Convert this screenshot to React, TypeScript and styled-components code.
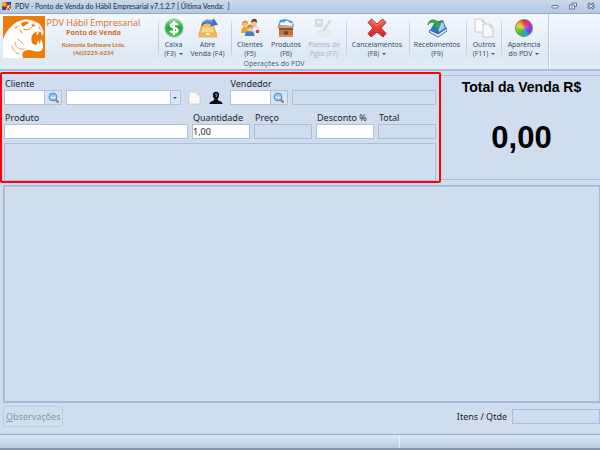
import React from "react";
import styled, { createGlobalStyle, css } from "styled-components";

const ui = `"Noto Sans", "Open Sans", sans-serif`;
const ribbonFont = `"Open Sans", "Noto Sans", sans-serif`;
const titleFont = `Lato, "Open Sans", sans-serif`;

const GlobalStyle = createGlobalStyle`
  *, *::before, *::after { box-sizing: border-box; }
  html, body { margin: 0; height: 100%; }
  body { background: #cfddee; font-family: ${ui}; font-size: 9px; color: #1c1f26; }
  button, input, select, output { font: inherit; color: inherit; margin: 0; }
`;

const Window = styled.div`
  display: flex;
  flex-direction: column;
  min-height: 100vh;
  overflow: hidden;
`;

const TitleBar = styled.header`
  display: flex;
  align-items: center;
  height: 14px;
  padding: 0 5px 2px 2px;
  background: linear-gradient(#c9d9ec, #b3c9e4);
  border-bottom: 1px solid #93abc9;
`;

const Title = styled.h1`
  flex: 1;
  margin: 0 0 0 3px;
  font: 500 7px/12px ${titleFont};
  color: #22344f;
  white-space: pre;
`;

const WindowButtons = styled.div`
  display: flex;
  gap: 10px;
`;

const WindowButton = styled.button`
  display: flex;
  padding: 0;
  border: 0;
  background: none;
`;

const Ribbon = styled.nav`
  display: flex;
  height: 57px;
  background: linear-gradient(#f4f8fd, #e6eef8 50%, #dde8f4 75%, #e4edf7);
  border-bottom: 2px solid #a9bdd8;
`;

const RibbonPage = styled.div`
  display: flex;
  flex-direction: column;
  border-right: 1px solid #bccce0;
  box-shadow: 1px 0 #f4f8fc;
`;

const RibbonRow = styled.div`
  display: flex;
  height: 45px;
`;

const Caption = styled.div`
  text-align: center;
  font: 7px/9px ${ribbonFont};
  color: #3f5878;
`;

const Brand = styled.div`
  display: flex;
  width: 158px;
  padding: 2px 0 0 3px;
`;

const BrandText = styled.div`
  flex: 1;
  padding-right: 16px;
  text-align: center;
  color: #d0701a;
  white-space: nowrap;
`;

const BrandName = styled.div`
  font: 500 9px/13px ${ribbonFont};
`;

const BrandProduct = styled.div`
  font: 700 7px/8px ${ribbonFont};
`;

const BrandContact = styled.div`
  margin-top: 4px;
  font: 700 6px/8px ${titleFont};
`;

const Group = styled.div<{ $width: number }>`
  display: flex;
  width: ${(p) => p.$width}px;
  border-left: 1px solid;
  border-image: linear-gradient(transparent 10%, #bfcfe2 30%, #bfcfe2 75%, transparent) 1;
`;

const Tool = styled.button<{ $width: number }>`
  display: flex;
  flex-direction: column;
  align-items: center;
  width: ${(p) => p.$width}px;
  padding: 4px 0 0;
  border: 0;
  background: none;
  font: 500 7px/9px ${ribbonFont};
  color: #2c4666;
  white-space: nowrap;
  svg { flex: none; }
  &:disabled { color: #a3b1c2; }
`;

const ToolLabel = styled.span`
  margin-top: 2px;
`;

const Caret = styled.span`
  display: inline-block;
  margin: 0 0 1px 3px;
  border: 2px solid transparent;
  border-top-color: #35506f;
  border-bottom: 0;
`;

const Top = styled.div`
  display: grid;
  grid-template-columns: minmax(0, 441fr) minmax(0, 159fr);
  margin-top: 1px;
`;

const SaleForm = styled.form`
  display: flex;
  flex-direction: column;
  padding: 4px 3px 0 2px;
  border: 2px solid #fb0007;
  border-radius: 2px;
`;

const FormRow = styled.div`
  display: flex;
  align-items: flex-end;
`;

const ProductRow = styled.div`
  display: grid;
  grid-template-columns: 184fr 58fr 58fr 58fr 58fr;
  gap: 4px;
  margin: 7px 0 4px;
`;

const Field = styled.div<{ $gap?: number }>`
  display: flex;
  flex-direction: column;
  min-width: 0;
  margin-left: ${(p) => p.$gap ?? 0}px;
`;

const GrowingField = styled(Field)`
  flex: 145 1 0;
`;

const Label = styled.label`
  padding-left: 1px;
  line-height: 12px;
  white-space: nowrap;
`;

const ReadOnlyLook = css`
  background: transparent;
  border-color: #aabfdb;
`;

const Input = styled.input<{ $width?: number }>`
  width: ${(p) => (p.$width ? `${p.$width}px` : "100%")};
  min-width: 0;
  height: 15px;
  padding: 0;
  border: 1px solid #aec2dc;
  border-radius: 0;
  background: #fff;
  outline: 0;
  &:read-only { ${ReadOnlyLook} }
`;

const Lookup = styled.div`
  display: flex;
`;

const LookupButton = styled.button`
  display: flex;
  align-items: center;
  justify-content: center;
  width: 17px;
  height: 15px;
  padding: 0;
  border: 1px solid #aec2dc;
  border-left: 0;
  background: #d6e3f2;
`;

const Combo = styled.div`
  display: grid;
  flex: 115 1 0;
  margin-left: 4px;
  > * { grid-area: 1 / 1; }
`;

const Select = styled.select`
  appearance: none;
  width: 100%;
  height: 15px;
  padding: 0 12px 0 2px;
  border: 1px solid #aec2dc;
  border-radius: 0;
  background: #fff;
`;

const ComboArrow = styled.span`
  display: flex;
  align-items: center;
  justify-content: center;
  justify-self: end;
  width: 11px;
  border: 1px solid #aec2dc;
  background: #d9e5f3;
  pointer-events: none;
  ${Caret} { margin: 0; }
`;

const IconButton = styled.button`
  display: flex;
  align-items: center;
  justify-content: center;
  width: 14px;
  height: 15px;
  margin-left: 7px;
  padding: 0;
  border: 0;
  background: none;
`;

const Description = styled.output`
  display: block;
  height: 38px;
  border: 1px solid #aabfdb;
`;

const TotalPanel = styled.section`
  margin: 3px 0;
  padding: 2px 0 0 2px;
  border: solid #aabfdb;
  border-width: 1px 0;
  text-align: center;
  font-family: "Liberation Sans", Arial, sans-serif;
  font-weight: 700;
  color: #000;
  white-space: nowrap;
`;

const TotalTitle = styled.h2`
  margin: 0;
  font-size: 14px;
  line-height: 18px;
`;

const TotalValue = styled.output`
  display: block;
  margin-top: 24px;
  font-size: 31px;
  line-height: 36px;
`;

const Items = styled.main`
  flex: 1;
  margin: 2px 0 0 3px;
  border: 2px solid #a6bbd8;
  border-right-width: 1px;
  box-shadow: inset 1px 1px #dde8f4;
`;

const Footer = styled.footer`
  display: flex;
  align-items: center;
  height: 32px;
  padding: 0 0 4px 3px;
  border-bottom: 1px solid #93abcb;
`;

const NotesButton = styled.button`
  height: 21px;
  padding: 0 2px;
  border: 1px solid #bccde0;
  border-radius: 2px;
  background: #d0dfee;
  &:disabled { color: #8496ab; }
`;

const Count = styled.div`
  display: flex;
  align-items: center;
  gap: 5px;
  margin-left: auto;
`;

const StatusBar = styled.div`
  display: flex;
  height: 15px;
  border-bottom: 2px solid #8797ab;
  background: linear-gradient(#dde8f4, #bccde1);
`;

const StatusPane = styled.div`
  flex: 2;
  border-right: 1px solid #e6eef7;
  & + & { flex: 1; border-right: 0; }
`;

const AppIcon = () => (
  <svg width="10" height="10" viewBox="0 0 10 10" aria-hidden="true">
    <rect x="0" y="1" width="9" height="8" fill="#c8381e" />
    <path d="M0 1h3l2 3-2 2-3-1z" fill="#f3a61e" />
    <path d="M5 1l4 0v4l-2-1z" fill="#2c4c8e" />
    <path d="M1 9V5l3 2 1 2z" fill="#28458a" />
    <path d="M5 5l4 4M8 4L4 9" stroke="#fff" strokeWidth="1" />
    <path d="M5 2l1 2 3 1-2 1" fill="#f6c74a" />
  </svg>
);

const JaguarLogo = () => (
  <svg width="42" height="42" viewBox="0 0 42 42" aria-hidden="true">
    <rect width="42" height="42" fill="#f07c08" />
    <path
      fill="#fff"
      d="M0 42V23C2 18 5 13 9 10C11 7 15 5 20 4C24 3 29 4 33 6C36 7 38 9 39 12C41 15 41 18 39 20L38 16C35 15 32 15 30 18C28 20 28 24 29 27C31 29 34 30 37 27L38 23C40 27 41 31 39 34C36 37 31 35 27 34C21 34 18 36 20 42Z"
    />
    <path d="M33 15L34 20L36 16ZM33 31L35 24L37 29Z" fill="#fff" />
    <path d="M18 8C20 5 24 5 26 7C24 8 22 9 20 11ZM28 8L33 9L30 11Z" fill="#f07c08" />
    <path
      d="M21 13C25 15 27 13 29 11M12 12L15 10M17 14L19 17M36 11L37 13"
      fill="none"
      stroke="#f07c08"
      strokeLinecap="round"
    />
    <path d="M12 26C12 31 16 34 21 33M9 30C10 35 13 37 16 38M15 23L20 28" fill="none" stroke="#f4a050" strokeLinecap="round" />
  </svg>
);

const CashIcon = () => (
  <svg width="20" height="20" viewBox="0 0 20 20" aria-hidden="true">
    <defs>
      <linearGradient id="cash" x2="0" y2="1">
        <stop stopColor="#8fe096" />
        <stop offset=".5" stopColor="#25a73e" />
        <stop offset="1" stopColor="#55cf67" />
      </linearGradient>
    </defs>
    <circle cx="10" cy="10" r="9.2" fill="url(#cash)" stroke="#9ccfa8" />
    <path d="M13.6 6.900C12.600 5.300 6.900 4.800 6.900 7.500C6.900 10.500 13.500 9 13.500 12.300C13.500 15.200 7.400 14.800 6.300 12.900M10 3V17" fill="none" stroke="#fff" strokeWidth="2.200" />
  </svg>
);

const OpenSaleIcon = () => (
  <svg width="20" height="20" viewBox="0 0 20 20" aria-hidden="true">
    <path d="M3 9L6 5H12L16 9L18.500 16V19H1V16Z" fill="#f5bf5a" stroke="#dc9f3c" strokeWidth=".7" />
    <path d="M5 9.500h9l1.500 4.500H3.500z" fill="#fbd98a" />
    <path d="M1 16h17.500" stroke="#e0a23c" strokeWidth=".8" />
    <path d="M8 15h4v2H8z" fill="#fff0c4" />
    <path d="M3.500 8C4 3 9 .500 14 3L15.500 .8L19.500 6.500L12.500 8L13.500 5.800C9 4 6 5 3.500 8Z" fill="#3f73cf" stroke="#2b59a8" strokeWidth=".6" />
    <path d="M6 4.500c2-2 5-2 8-.200" stroke="#8db5ee" fill="none" />
  </svg>
);

const CustomersIcon = () => (
  <svg width="20" height="20" viewBox="0 0 20 20" aria-hidden="true">
    <path d="M1 15c0-5 2-6 4-6s4 2 4 6z" fill="#e2a62c" />
    <circle cx="5" cy="6" r="3" fill="#f3c193" />
    <path d="M2 8c-1-7 7-7 6-2C6 5 4 4 3 6z" fill="#d9982a" />
    <path d="M11 14c0-5 2-6 4-6s4 2 4 6z" fill="#e9eef7" stroke="#8ba3c9" strokeWidth=".6" />
    <circle cx="14" cy="5" r="3" fill="#f3c193" />
    <path d="M11 5c0-6 7-5 6 0-1-2-4-2-6 0z" fill="#7b3a18" />
    <path d="M5 18c0-4 2-5 4.500-5s5 1 5 5z" fill="#3e7cd0" />
    <circle cx="10" cy="10.500" r="3" fill="#f7c79c" />
    <path d="M7 11c-1-6 7-6 6 0-1-2-4-2-6 0z" fill="#d98a24" />
    <path d="M16 12h3v3h-3z" fill="#d23e35" />
  </svg>
);

const ProductsIcon = () => (
  <svg width="20" height="20" viewBox="0 0 20 20" aria-hidden="true">
    <path d="M4 2l5-1 7 2 2 5H2z" fill="#4f9fe0" />
    <path d="M4 7c0-3 2-4 4-2 1-3 5-3 5 0 3-1 4 1 3 3z" fill="#f4faff" />
    <path d="M1 8h17l-1.500 3h-14z" fill="#d99b62" />
    <path d="M3 10h14v9H3z" fill="#b97742" />
    <path d="M3 10h14v2H3z" fill="#8f5529" />
    <circle cx="10" cy="15" r="2" fill="#76411d" />
    <path d="M3 18h14" stroke="#e2b07c" />
  </svg>
);

const PlansIcon = () => (
  <svg width="20" height="20" viewBox="0 0 20 20" aria-hidden="true">
    <rect x="1" y="1" width="8" height="8" rx="1" fill="#d2dae3" />
    <path d="M3 3h4v2H3z" fill="#eff3f7" />
    <path d="M4 14l7-3 7 3-8 5z" fill="#e9edf2" stroke="#d0d8e1" strokeWidth=".7" />
    <path d="M17 3l-6 9-2 2 .500-3 6-9z" fill="#cbd4de" />
  </svg>
);

const CancelIcon = () => (
  <svg width="20" height="20" viewBox="0 0 20 20" aria-hidden="true">
    <defs>
      <linearGradient id="cancel" x2="0" y2="1">
        <stop stopColor="#f0675a" />
        <stop offset="1" stopColor="#d81f20" />
      </linearGradient>
    </defs>
    <path d="M4.500 1L10 6L15.500 1L19 4.500L14 10L19 15.500L16 19L10 14L4 19L1 15.500L6 10L1 4.500Z" fill="url(#cancel)" stroke="#b21f20" strokeLinejoin="round" strokeWidth=".9" />
    <path d="M4.500 2.500L10 7.500L15.500 2.500" fill="none" stroke="#f9a79d" strokeWidth=".7" />
  </svg>
);

const ReceiptsIcon = () => (
  <svg width="20" height="20" viewBox="0 0 20 20" aria-hidden="true">
    <path d="M8 4l8-2 4 10-9 6-9-4z" fill="#2f6fca" />
    <path d="M3 12l8 4 9-6v3l-9 6-9-5z" fill="#e6eef8" stroke="#1e4fa0" strokeWidth=".8" />
    <path d="M10 6l6-2 2 6-6 4z" fill="#a8cdf3" />
    <path d="M1 7C1 1 9 0 11 5L14 4L11.500 11L6 8L8.500 6.500C7 3.500 3 3.500 1 7Z" fill="#35ad3e" stroke="#1f8530" strokeWidth=".6" />
  </svg>
);

const OthersIcon = () => (
  <svg width="20" height="20" viewBox="0 0 20 20" aria-hidden="true">
    <path d="M1 1h7l3 3v10H1z" fill="#fbfbfb" stroke="#bdbdbd" strokeWidth=".7" />
    <path d="M8 1v3h3" fill="#ddd" stroke="#bdbdbd" strokeWidth=".6" />
    <path d="M9 6h7l3 3v10H9z" fill="#f7f7f7" stroke="#b2b2b2" strokeWidth=".7" />
    <path d="M16 6v3h3" fill="#ddd" stroke="#b2b2b2" strokeWidth=".6" />
  </svg>
);

const ColorWheel = styled.span`
  width: 18px;
  height: 18px;
  margin: 1px;
  border: 1px solid #777f8c;
  border-radius: 50%;
  background:
    radial-gradient(circle at 50% 45%, rgba(255, 255, 255, 0.3), transparent 45%),
    conic-gradient(#e8302c, #d8308a 12%, #a335d6 25%, #4c54e6 36%, #22a6e0 44%, #28b85c 55%, #6cc828 68%, #d8d822 80%, #f59a1e 90%, #e8302c);
`;

const SearchIcon = () => (
  <svg width="11" height="11" viewBox="0 0 11 11" aria-hidden="true">
    <path d="M7.500 7.500L10 10" stroke="#b07332" strokeWidth="2" strokeLinecap="round" />
    <circle cx="5" cy="5" r="3.900" fill="#8cc8f4" stroke="#5383b8" />
    <path d="M2.500 5.500h5" stroke="#e6f5ff" strokeWidth="1.500" />
  </svg>
);

const PageIcon = () => (
  <svg width="13" height="14" viewBox="0 0 13 14" aria-hidden="true">
    <path d="M1 1h8l3 3v9H1z" fill="#fbfaf7" stroke="#c9c9c6" strokeWidth=".8" />
    <path d="M9 1v3h3" fill="#e4e2dd" stroke="#c9c9c6" strokeWidth=".6" />
  </svg>
);

const PersonIcon = () => (
  <svg width="14" height="14" viewBox="0 0 14 14" aria-hidden="true">
    <path d="M7 .800C9.500 .800 10.500 2.500 10 5C9.700 7 8.700 7.600 8.500 8.500C9 10 13.500 10 13.500 13H.500C.500 10 5 10 5.500 8.500C5.300 7.600 4.300 7 4 5C3.500 2.500 4.500 .800 7 .800Z" fill="#0a0a0a" />
    <path d="M6 3.500c1-1 2.500-.500 2 .800L7 6" stroke="#cfddee" fill="none" strokeWidth=".8" />
  </svg>
);

const MinimizeIcon = () => (
  <svg width="8" height="8" viewBox="0 0 8 8" aria-hidden="true">
    <rect x="1" y="3.500" width="6" height="2.500" rx=".500" fill="#f3f6fa" stroke="#63738a" />
  </svg>
);

const RestoreIcon = () => (
  <svg width="8" height="8" viewBox="0 0 8 8" aria-hidden="true">
    <path d="M3 3V1h4.500v3.500H6M.500 3H5.500V7H.500Z" fill="#f3f6fa" stroke="#63738a" />
    <path d="M2 5h2" stroke="#63738a" />
  </svg>
);

const CloseIcon = () => (
  <svg width="8" height="8" viewBox="0 0 8 8" aria-hidden="true">
    <path d="M1 1.500L7 6.500M7 1.500L1 6.500" stroke="#63738a" strokeWidth="3" />
    <path d="M1.500 2L6.500 6M6.500 2L1.500 6" stroke="#f3f6fa" />
  </svg>
);

type ToolDef = { icon: React.ReactNode; top: string; bottom: string; width: number; menu?: boolean; disabled?: boolean };

const groups: { width: number; tools: ToolDef[] }[] = [
  {
    width: 73,
    tools: [
      { icon: <CashIcon />, top: "Caixa", bottom: "(F3)", width: 29, menu: true },
      { icon: <OpenSaleIcon />, top: "Abre", bottom: "Venda (F4)", width: 39 },
    ],
  },
  {
    width: 115,
    tools: [
      { icon: <CustomersIcon />, top: "Clientes", bottom: "(F5)", width: 36 },
      { icon: <ProductsIcon />, top: "Produtos", bottom: "(F6)", width: 36 },
      { icon: <PlansIcon />, top: "Planos de", bottom: "Pgto (F7)", width: 40, disabled: true },
    ],
  },
  { width: 63, tools: [{ icon: <CancelIcon />, top: "Cancelamentos", bottom: "(F8)", width: 60, menu: true }] },
  { width: 57, tools: [{ icon: <ReceiptsIcon />, top: "Recebimentos", bottom: "(F9)", width: 54 }] },
  { width: 35, tools: [{ icon: <OthersIcon />, top: "Outros", bottom: "(F11)", width: 34, menu: true }] },
  { width: 47, tools: [{ icon: <ColorWheel />, top: "Aparência", bottom: "do PDV", width: 44, menu: true }] },
];

const ToolButton = ({ icon, top, bottom, width, menu, disabled }: ToolDef) => (
  <Tool type="button" $width={width} disabled={disabled}>
    {icon}
    <ToolLabel>
      {top}
      <br />
      {bottom}
      {menu && <Caret />}
    </ToolLabel>
  </Tool>
);

export default function App() {
  return (
    <Window>
      <GlobalStyle />
      <TitleBar>
        <AppIcon />
        <Title>{"PDV - Ponto de Venda do Hábil Empresarial v7.1.2.7 [ Última Venda:  ]"}</Title>
        <WindowButtons>
          <WindowButton aria-label="Minimizar"><MinimizeIcon /></WindowButton>
          <WindowButton aria-label="Restaurar"><RestoreIcon /></WindowButton>
          <WindowButton aria-label="Fechar"><CloseIcon /></WindowButton>
        </WindowButtons>
      </TitleBar>

      <Ribbon>
        <RibbonPage>
          <RibbonRow>
            <Brand>
              <JaguarLogo />
              <BrandText>
                <BrandName>PDV Hábil Empresarial</BrandName>
                <BrandProduct>Ponto de Venda</BrandProduct>
                <BrandContact>
                  Koinonia Software Ltda.
                  <br />
                  (46)3225-6234
                </BrandContact>
              </BrandText>
            </Brand>
            {groups.map((group) => (
              <Group key={group.tools[0].top} $width={group.width}>
                {group.tools.map((tool) => (
                  <ToolButton key={tool.top} {...tool} />
                ))}
              </Group>
            ))}
          </RibbonRow>
          <Caption>Operações do PDV</Caption>
        </RibbonPage>
      </Ribbon>

      <Top>
        <SaleForm onSubmit={(e) => e.preventDefault()}>
          <FormRow>
            <Field>
              <Label htmlFor="cliente">Cliente</Label>
              <Lookup>
                <Input id="cliente" $width={41} />
                <LookupButton type="button" aria-label="Buscar cliente"><SearchIcon /></LookupButton>
              </Lookup>
            </Field>
            <Combo>
              <Select aria-label="Nome do cliente" defaultValue="">
                <option value="" />
              </Select>
              <ComboArrow><Caret /></ComboArrow>
            </Combo>
            <IconButton type="button" aria-label="Novo cliente"><PageIcon /></IconButton>
            <IconButton type="button" aria-label="Dados do cliente"><PersonIcon /></IconButton>
            <Field $gap={7}>
              <Label htmlFor="vendedor">Vendedor</Label>
              <Lookup>
                <Input id="vendedor" $width={41} />
                <LookupButton type="button" aria-label="Buscar vendedor"><SearchIcon /></LookupButton>
              </Lookup>
            </Field>
            <GrowingField $gap={4}>
              <Input aria-label="Nome do vendedor" readOnly />
            </GrowingField>
          </FormRow>
          <ProductRow>
            <Field>
              <Label htmlFor="produto">Produto</Label>
              <Input id="produto" />
            </Field>
            <Field>
              <Label htmlFor="quantidade">Quantidade</Label>
              <Input id="quantidade" defaultValue="1,00" />
            </Field>
            <Field>
              <Label htmlFor="preco">Preço</Label>
              <Input id="preco" readOnly />
            </Field>
            <Field>
              <Label htmlFor="desconto">Desconto %</Label>
              <Input id="desconto" />
            </Field>
            <Field>
              <Label htmlFor="total">Total</Label>
              <Input id="total" readOnly />
            </Field>
          </ProductRow>
          <Description aria-label="Descrição do produto" />
        </SaleForm>
        <TotalPanel>
          <TotalTitle>Total da Venda R$</TotalTitle>
          <TotalValue>0,00</TotalValue>
        </TotalPanel>
      </Top>

      <Items aria-label="Itens da venda" />

      <Footer>
        <NotesButton type="button" disabled><u>O</u>bservações</NotesButton>
        <Count>
          <label htmlFor="itens">Itens / Qtde</label>
          <Input id="itens" $width={88} readOnly />
        </Count>
      </Footer>
      <StatusBar>
        <StatusPane />
        <StatusPane />
      </StatusBar>
    </Window>
  );
}
